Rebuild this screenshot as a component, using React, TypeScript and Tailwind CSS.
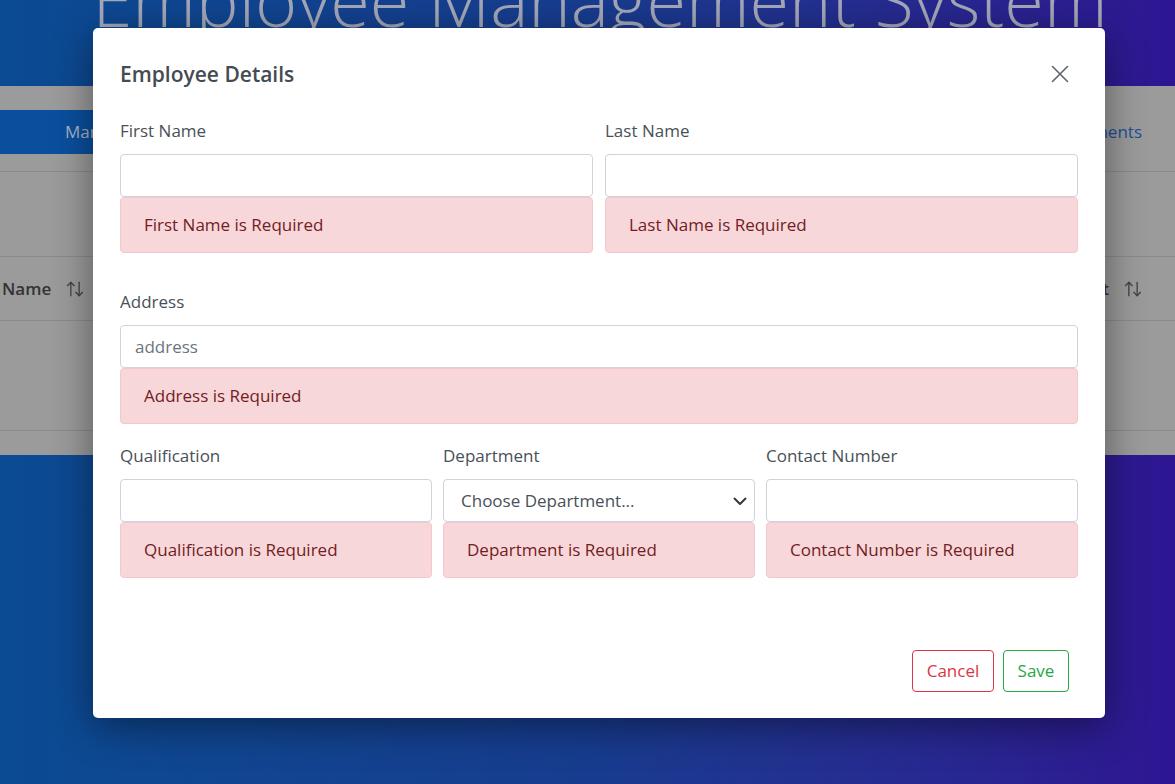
import { ArrowUpDown } from 'lucide-react';

const font = { fontFamily: '"Open Sans", "Noto Sans", sans-serif' };

const Field = ({ label, error, placeholder, select }: { label: string; error: string; placeholder?: string; select?: boolean }) => (
  <div className="flex flex-col">
    <label className="h-6 leading-6 text-[17px] text-[#495057] mb-[11px]">{label}</label>
    {select ? (
      <div className="h-[43px] flex items-center justify-between border border-[#ced4da] rounded-[4px] bg-white pl-[17px] pr-[6px]">
        <span className="text-[17px] text-[#495057]">Choose Department...</span>
        <svg width="16" height="16" viewBox="0 0 16 16" fill="none" stroke="#343a40" strokeWidth="2" strokeLinecap="round" strokeLinejoin="round">
          <path d="M2.5 5.5l5.5 5.5 5.5-5.5" />
        </svg>
      </div>
    ) : (
      <input
        placeholder={placeholder}
        className="h-[43px] border border-[#ced4da] rounded-[4px] bg-white px-[14px] text-[17px] text-[#495057] placeholder:text-[#6c757d] outline-none"
      />
    )}
    <div className="h-[56px] flex items-center px-[23px] bg-[#f8d7da] border border-[#f5c6cb] rounded-[4px] text-[17px] text-[#721c24]">
      {error}
    </div>
  </div>
);

const App = () => {
  return (
    <div className="relative h-[784px] overflow-hidden bg-gradient-to-r from-[#0a4b93] via-[#173c8f] to-[#2e1592]" style={font}>
      {/* page behind the dialog */}
      <div className="h-[86px] overflow-hidden">
        <h1 className="mt-[-37px] text-center text-[72px] leading-[72px] font-light text-[#a4a8b8] pl-[25px] whitespace-nowrap">
          Employee Management System
        </h1>
      </div>
      <div className="h-[369px] bg-[#9b9b9b]">
        <div className="pt-[24px] h-[86px] border-b border-[#8b8b8b] flex items-start justify-between">
          <div className="h-[44px] w-[240px] bg-[#0a4f9e] flex items-center pl-[65px] text-[17px] text-[#a9b3c2]">Manage Employees</div>
          <div className="h-[44px] flex items-center pr-[33px] text-[17px] text-[#1d4f98]">Departments</div>
        </div>
        <div className="h-[85px] border-b border-[#8b8b8b]"></div>
        <div className="h-[64px] border-b border-[#8b8b8b] flex items-center justify-between pl-[2px] pr-[32px]">
          <div className="flex items-center gap-[14px] text-[17px] font-semibold text-[#333]">
            Name <ArrowUpDown size={20} strokeWidth={1.6} className="text-[#444]" />
          </div>
          <div className="flex items-center gap-[14px] text-[17px] font-semibold text-[#333]">
            Contact <ArrowUpDown size={20} strokeWidth={1.6} className="text-[#444]" />
          </div>
        </div>
        <div className="h-[110px] border-b border-[#8b8b8b]"></div>
      </div>

      {/* dialog */}
      <div className="absolute inset-0">
        <div className="ml-[93px] mt-[28px] w-[1012px] h-[690px] bg-white rounded-[5px] shadow-[0_8px_40px_rgba(0,0,0,0.45)] flex flex-col">
          <div className="flex items-center justify-between h-6 mt-[34px] pl-[27px] pr-[36px]">
            <h5 className="text-[21px] leading-6 font-semibold text-[#454b52]">Employee Details</h5>
            <svg width="18" height="18" viewBox="0 0 18 18" stroke="#5c6670" strokeWidth="1.6" strokeLinecap="round">
              <path d="M1.5 1.5l15 15M16.5 1.5l-15 15" />
            </svg>
          </div>
          <div className="px-[27px] pt-[33px] flex flex-col">
            <div className="grid grid-cols-2 gap-x-[12px]">
              <Field label="First Name" error="First Name is Required" />
              <Field label="Last Name" error="Last Name is Required" />
            </div>
            <div className="mt-[37px]">
              <Field label="Address" error="Address is Required" placeholder="address" />
            </div>
            <div className="mt-[20px] grid grid-cols-3 gap-x-[11px]">
              <Field label="Qualification" error="Qualification is Required" />
              <Field label="Department" error="Department is Required" select />
              <Field label="Contact Number" error="Contact Number is Required" />
            </div>
          </div>
          <div className="mt-auto mb-[26px] flex justify-end gap-[9px] pr-[36px]">
            <button className="h-[42px] w-[82px] border border-[#dc3545] rounded-[4px] text-[17px] text-[#dc3545]">Cancel</button>
            <button className="h-[42px] w-[66px] border border-[#28a745] rounded-[4px] text-[17px] text-[#28a745]">Save</button>
          </div>
        </div>
      </div>
    </div>
  );
};

export default App;
